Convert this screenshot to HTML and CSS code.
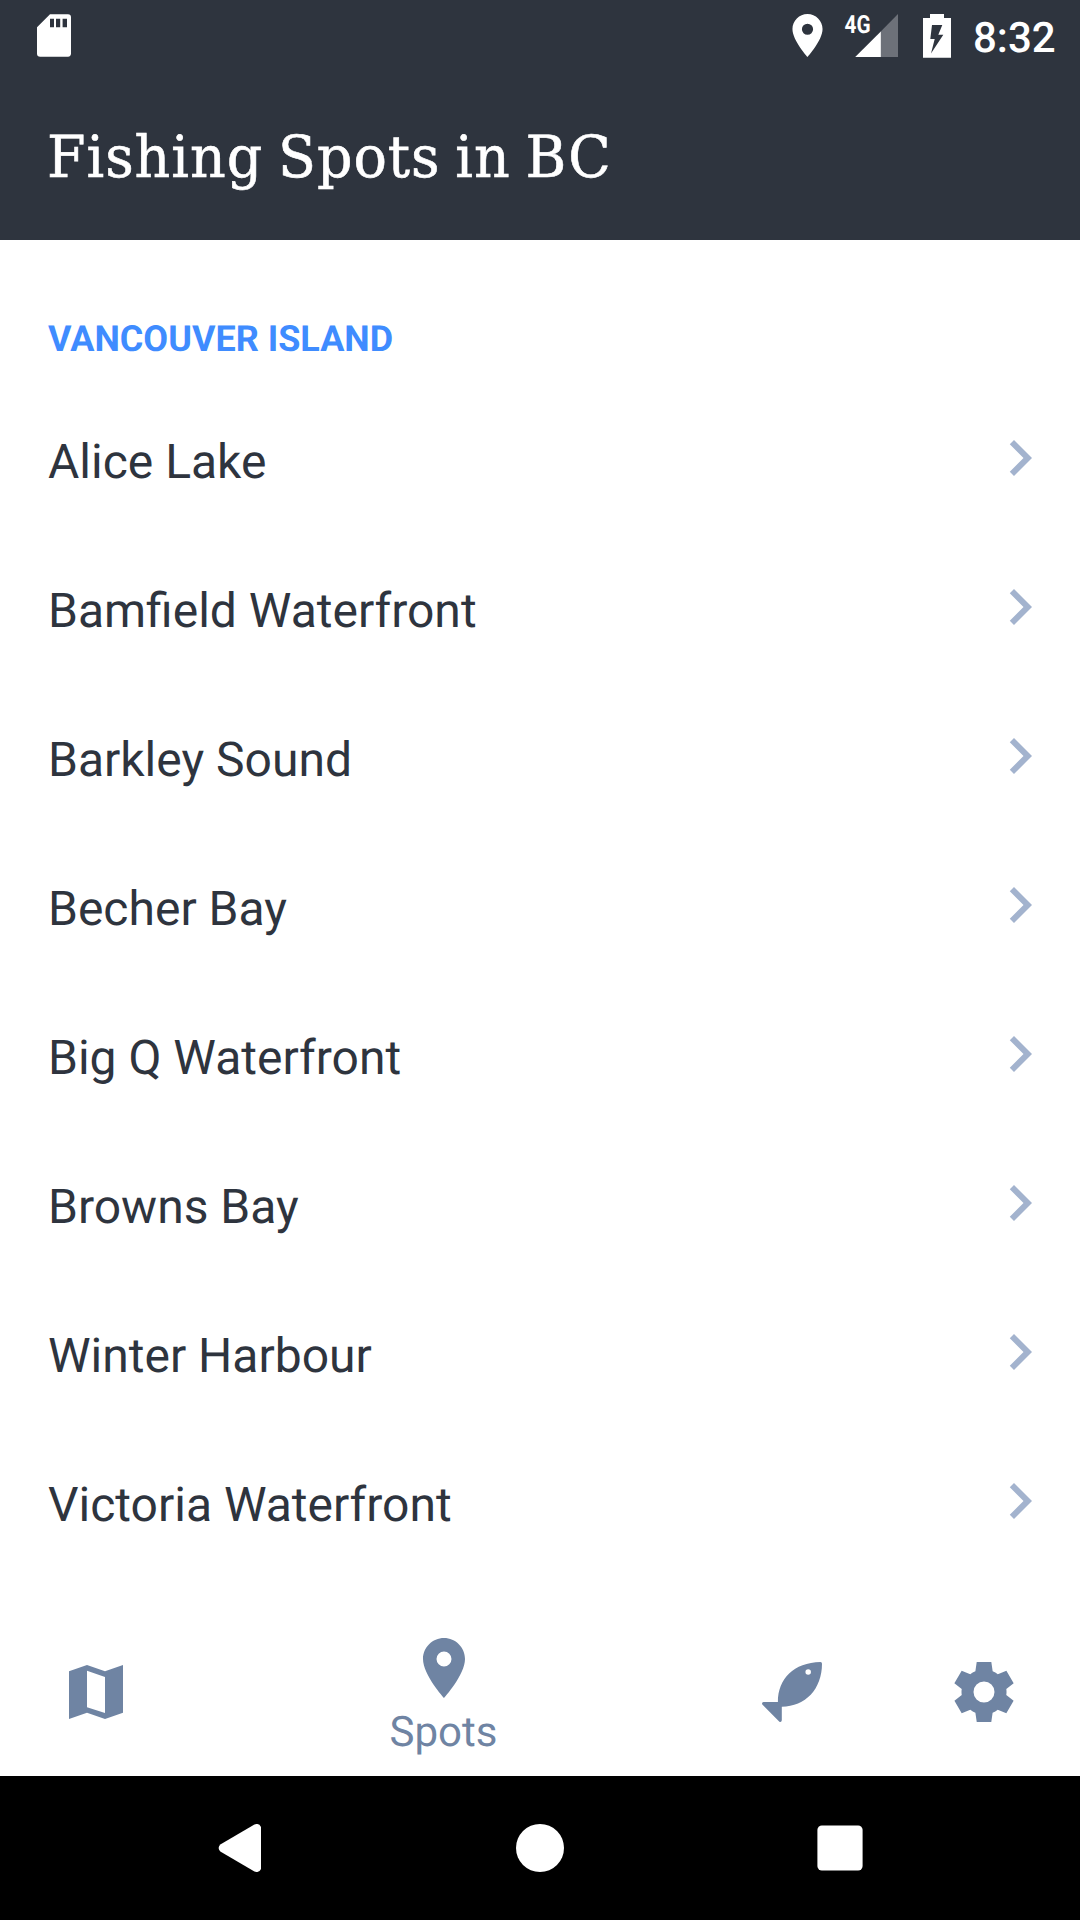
FILE: index.html
```html
<!DOCTYPE html>
<html lang="en">
<head>
<meta charset="utf-8">
<title>Fishing Spots in BC</title>
<link rel="stylesheet" href="styles.css">
</head>
<body>
<div class="screen">
  <header class="app-header">
    <div class="status-bar">
      <svg class="sd-card" width="34" height="43" viewBox="0 0 34 43"><path fill-rule="evenodd" d="M13 0.3H31a3 3 0 0 1 3 3V39.5a3.3 3.3 0 0 1-3 3.3H3.2a3.3 3.3 0 0 1-3.2-3.3V13.2ZM13 4.8v8.4h4V4.8ZM19 4.8v8.4h4.200V4.8ZM25.600 4.8v8.400h4.400V4.8Z"/></svg>
      <div class="status-icons">
        <svg width="31" height="43" viewBox="5 2 14 20"><path d="M12 2C8.130 2 5 5.130 5 9c0 5.250 7 13 7 13s7-7.750 7-13c0-3.870-3.130-7-7-7zm0 9.700a2.600 2.600 0 1 1 0-5.200 2.600 2.600 0 0 1 0 5.200z"/></svg>
        <svg class="signal" width="54" height="43" viewBox="0 0 54 43">
          <path class="signal-empty" d="M36 18.300 54 0V43H36Z"/>
          <path d="M11.200 43 36.800 17.400V43Z"/>
          <text class="network" x="0.500" y="19" textLength="26" lengthAdjust="spacingAndGlyphs">4G</text>
        </svg>
        <svg class="battery" width="28" height="44" viewBox="0 0 28 44"><path fill-rule="evenodd" d="M7 0H21V4H28V43.700H0V4H7ZM9 11 7.300 25H11.700L8 39.500 20.300 20.700H15.300L19.300 11Z"/></svg>
        <span class="clock">8:32</span>
      </div>
    </div>
    <h1 class="title"><span>Fishing Spots in BC</span></h1>
  </header>

  <main class="content">
    <h2 class="section-title">VANCOUVER ISLAND</h2>
    <ul class="spots">
      <li class="spot"><span>Alice Lake</span><svg class="chevron" viewBox="0 0 24 24"><path d="M10 6 8.590 7.410 13.170 12l-4.580 4.590L10 18l6-6z"/></svg></li>
      <li class="spot"><span>Bamfield Waterfront</span><svg class="chevron" viewBox="0 0 24 24"><path d="M10 6 8.590 7.410 13.170 12l-4.580 4.590L10 18l6-6z"/></svg></li>
      <li class="spot"><span>Barkley Sound</span><svg class="chevron" viewBox="0 0 24 24"><path d="M10 6 8.590 7.410 13.170 12l-4.580 4.590L10 18l6-6z"/></svg></li>
      <li class="spot"><span>Becher Bay</span><svg class="chevron" viewBox="0 0 24 24"><path d="M10 6 8.590 7.410 13.170 12l-4.580 4.590L10 18l6-6z"/></svg></li>
      <li class="spot"><span>Big Q Waterfront</span><svg class="chevron" viewBox="0 0 24 24"><path d="M10 6 8.590 7.410 13.170 12l-4.580 4.590L10 18l6-6z"/></svg></li>
      <li class="spot"><span>Browns Bay</span><svg class="chevron" viewBox="0 0 24 24"><path d="M10 6 8.590 7.410 13.170 12l-4.580 4.590L10 18l6-6z"/></svg></li>
      <li class="spot"><span>Winter Harbour</span><svg class="chevron" viewBox="0 0 24 24"><path d="M10 6 8.590 7.410 13.170 12l-4.580 4.590L10 18l6-6z"/></svg></li>
      <li class="spot"><span>Victoria Waterfront</span><svg class="chevron" viewBox="0 0 24 24"><path d="M10 6 8.590 7.410 13.170 12l-4.580 4.590L10 18l6-6z"/></svg></li>
    </ul>
  </main>

  <nav class="tabs">
    <div class="tab"><svg viewBox="0 0 24 24"><path fill-rule="evenodd" d="M3 5.100 9 3 15 5.100 21 3V18.900L15 21 9 18.900 3 21ZM9 4.900V17.100L15 19V7Z"/></svg></div>
    <div class="tab tab-active"><svg viewBox="0 0 24 24"><path d="M12 2C8.130 2 5 5.130 5 9c0 5.250 7 13 7 13s7-7.750 7-13c0-3.870-3.130-7-7-7zm0 9.500a2.500 2.500 0 1 1 0-5 2.500 2.500 0 0 1 0 5z"/></svg><span>Spots</span></div>
    <div class="tab"><svg viewBox="0 0 24 24"><path fill-rule="evenodd" d="M21.500 2Q22 2 22 2.600C22 11 16.500 16.900 8.600 16.900V21.400Q8.500 22.200 7.800 21.900L2.100 16.200Q1.800 15.400 2.500 15.300H7.300C7.300 7.600 12.600 2.200 21.500 2ZM17.400 4.400a0.920 0.920 0 1 0 0 1.840 0.920 0.920 0 1 0 0-1.840Z"/></svg></div>
    <div class="tab"><svg viewBox="0 0 24 24"><path fill-rule="evenodd" d="M19.430 13.010c.04-.33.08-.67.08-1.010 0-.34-.03-.66-.07-.99l2.450-1.900-2.430-4.220-2.860 1.170c-.52-.4-1.090-.74-1.710-1L14.440 2H9.570l-.44 3.070c-.62.26-1.190.6-1.710 1L4.560 4.890 2.120 9.110l2.450 1.900c-.04.33-.07.65-.07.99 0 .34.03.68.08 1.010L2.140 14.900l2.430 4.200 2.860-1.190c.53.41 1.100.75 1.700 1.010L9.580 22h4.850l.44-3.070c.62-.26 1.200-.6 1.710-1.010l2.860 1.190 2.430-4.200ZM12 15.500a3.500 3.500 0 1 1 0-7 3.500 3.500 0 0 1 0 7z"/></svg></div>
  </nav>

  <footer class="system-nav">
    <svg width="44" height="48" viewBox="0 0 44 48"><path d="M36 .7 2.300 20.500Q-1 24 2.300 27.500L36 47.300Q41 49.500 43 45V3Q41-1.500 36 .7Z"/></svg>
    <svg width="48" height="48" viewBox="0 0 48 48"><circle cx="24" cy="24" r="24"/></svg>
    <svg width="46" height="46" viewBox="0 0 46 46"><rect x=".4" y=".4" width="45.200" height="45.200" rx="4.500"/></svg>
  </footer>
</div>
</body>
</html>
```
FILE: styles.css
```css
* { box-sizing: border-box; }
body { margin: 0; background: #fff; font-family: Roboto, "Liberation Sans", sans-serif; text-rendering: geometricPrecision; }
svg { display: block; flex: none; fill: currentColor; }

.screen { width: 1080px; height: 1920px; display: flex; flex-direction: column; overflow: hidden; }

.app-header { height: 240px; background: #2e343e; color: #fff; }
.status-bar { height: 72px; padding: 0 25px 0 37px; display: flex; justify-content: space-between; align-items: center; }
.status-icons { display: flex; align-items: center; height: 72px; }
.signal { margin-left: 21px; overflow: visible; }
.signal-empty { fill: #6d7179; }
.network { font-size: 25px; font-weight: 700; }
.battery { margin-left: 25px; }
.clock { width: 82px; margin-left: 22px; padding-top: 5px; font-size: 42px; font-weight: 500; line-height: 72px; }

.title { margin: 0; height: 168px; padding: 1px 0 0 47px; font-family: "DejaVu Serif", serif; font-size: 58px; font-weight: 400; line-height: 168px; white-space: nowrap; }
.title span { display: inline-block; letter-spacing: 1px; word-spacing: -4px; transform: scaleX(.957); transform-origin: left; -webkit-text-stroke: .6px #fff; }

.sd-card, .status-icons svg { margin-bottom: 1px; }

.content { flex: 1; }
.section-title { margin: 0; height: 147px; padding: 51px 48px 0; font-size: 36px; font-weight: 700; line-height: 97px; color: #3f8cff; }
.spots { margin: 0; padding: 0; list-style: none; }
.spot { height: 149px; padding: 0 24px 0 48px; display: flex; justify-content: space-between; align-items: center; font-size: 48px; color: #2e343e; }
.chevron { width: 72px; height: 72px; margin-bottom: 7px; color: #a3b3ce; }

.tabs { height: 168px; display: flex; color: #6f84a3; }
.tab { width: 192px; display: flex; flex-direction: column; align-items: center; padding-top: 48px; }
.tab svg { width: 72px; height: 72px; }
.tab-active { width: 504px; padding-top: 24px; font-size: 42px; line-height: 58px; }
.tab-active span { margin-right: 1px; }

.system-nav { height: 144px; padding: 0 90px; display: grid; grid-template-columns: repeat(3, 300px); align-items: center; justify-items: center; background: #000; color: #fff; }
```
